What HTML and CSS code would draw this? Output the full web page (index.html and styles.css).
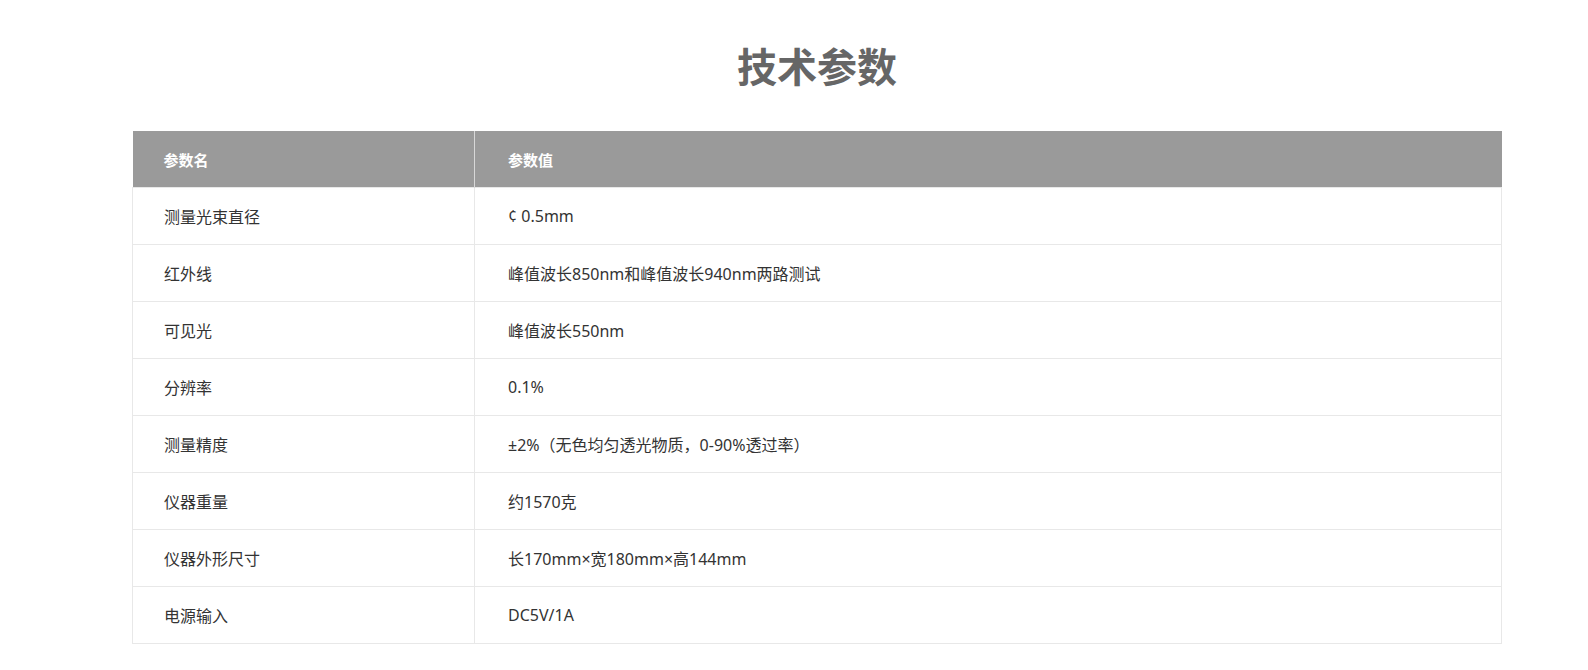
FILE: index.html
```html
<!DOCTYPE html>
<html lang="zh-CN">
  <head>
    <meta charset="UTF-8" />
    <meta name="viewport" content="width=device-width, initial-scale=1.0" />
    <title>技术参数</title>
    <link rel="stylesheet" href="styles.css">
  </head>
  <body>
    <div class="wrap">
      <h2 class="title">技术参数</h2>
      <table class="params">
        <colgroup>
          <col class="col-name" />
          <col />
        </colgroup>
        <thead>
          <tr>
            <th>参数名</th>
            <th>参数值</th>
          </tr>
        </thead>
        <tbody>
          <tr><td>测量光束直径</td><td>¢ 0.5mm</td></tr>
          <tr><td>红外线</td><td>峰值波长850nm和峰值波长940nm两路测试</td></tr>
          <tr><td>可见光</td><td>峰值波长550nm</td></tr>
          <tr><td>分辨率</td><td>0.1%</td></tr>
          <tr><td>测量精度</td><td>±2%（无色均匀透光物质，0-90%透过率）</td></tr>
          <tr><td>仪器重量</td><td>约1570克</td></tr>
          <tr><td>仪器外形尺寸</td><td>长170mm×宽180mm×高144mm</td></tr>
          <tr><td>电源输入</td><td>DC5V/1A</td></tr>
        </tbody>
      </table>
    </div>
  </body>
</html>
```

FILE: styles.css
```css
body {
  margin: 0;
  background: #fff;
  font-family: "Noto Sans", "Noto Sans CJK SC", sans-serif;
  color: #333;
}
.wrap {
  width: 1370px;
  margin-left: 132px;
}
.title {
  margin: 37px 0 34px;
  font-size: 40px;
  line-height: 60px;
  font-weight: bold;
  color: #666;
  text-align: center;
}
.params {
  width: 100%;
  border-collapse: collapse;
  table-layout: fixed;
  font-size: 16px;
}
.col-name {
  width: 342px;
}
.params th {
  height: 56px;
  padding: 0 0 0 31px;
  background: #9a9a9a;
  color: #fff;
  font-size: 15px;
  font-weight: bold;
  text-align: left;
  border-right: 1px solid #d8d8d8;
}
.params th:last-child {
  border-right: none;
  padding-left: 33px;
}
.params td {
  height: 56px;
  padding: 0 0 0 31px;
  border: 1px solid #e8e8e8;
  vertical-align: middle;
}
.params td:last-child {
  padding-left: 33px;
}
```
